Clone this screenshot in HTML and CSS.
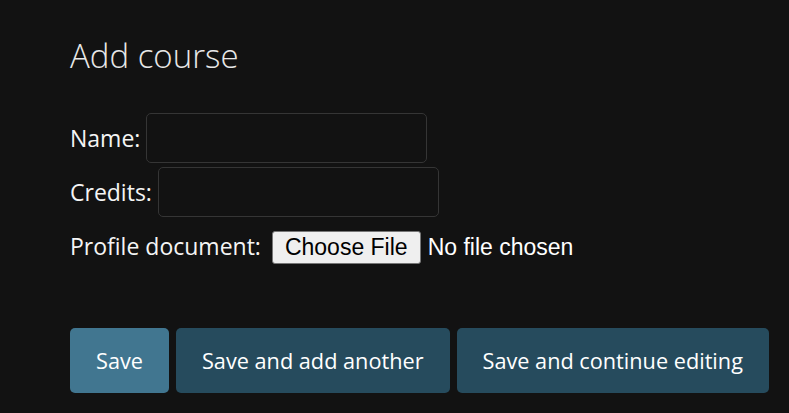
FILE: index.html
```html
<!DOCTYPE html>
<html>
<head>
<meta charset="utf-8">
<link rel="stylesheet" href="styles.css">
</head>
<body>
<main class="content">
  <h1 class="title">Add course</h1>
  <form class="form">
    <div class="row">
      <label class="label" for="name">Name:</label>
      <input class="field" id="name" type="text">
    </div>
    <div class="row">
      <label class="label" for="credits">Credits:</label>
      <input class="field" id="credits" type="text">
    </div>
    <div class="row row-file">
      <label class="label">Profile document:</label>
      <span class="file">
        <button type="button" class="file-btn">Choose File</button>
        <span class="file-status">No file chosen</span>
      </span>
    </div>
    <div class="actions">
      <button type="button" class="btn btn-default">Save</button>
      <button type="button" class="btn">Save and add another</button>
      <button type="button" class="btn">Save and continue editing</button>
    </div>
  </form>
</main>
</body>
</html>
```
FILE: styles.css
```css
html, body {
  margin: 0;
  padding: 0;
  background: #121212;
  color: #f5f5f5;
  font-family: "Open Sans", "Noto Sans", sans-serif;
}
.content {
  padding: 36px 20px 0 70px;
}
.title {
  margin: 0 0 37px;
  font-size: 33px;
  font-weight: 300;
  color: #e8e8e8;
  line-height: 1.2;
}
.form {
  display: flex;
  flex-direction: column;
}
.row {
  display: flex;
  align-items: center;
  gap: 6px;
  margin-bottom: 4px;
}
.label {
  font-size: 23px;
  color: #f5f5f5;
}
.field {
  width: 281px;
  height: 50px;
  box-sizing: border-box;
  background: #121212;
  border: 1px solid #353535;
  border-radius: 5px;
  color: #fff;
}
.row-file {
  align-items: baseline;
  margin-top: 9px;
  gap: 11px;
}
.file {
  display: inline-flex;
  align-items: baseline;
  gap: 7px;
}
.file-btn {
  font-family: "Liberation Sans", Arial, sans-serif;
  font-size: 23px;
  height: 33px;
  padding: 0 12px;
  background: #efefef;
  color: #000;
  border: 1px solid #767676;
  border-radius: 3px;
}
.file-status {
  font-family: "Liberation Sans", Arial, sans-serif;
  font-size: 23px;
  color: #fff;
}
.actions {
  display: flex;
  gap: 7px;
  margin-top: 60px;
}
.btn {
  height: 65px;
  padding: 0 26px;
  border: none;
  border-radius: 5px;
  background: #264b5d;
  color: #fff;
  font-family: "Open Sans", "Noto Sans", sans-serif;
  font-size: 21.7px;
}
.btn-default {
  background: #417690;
}
```
